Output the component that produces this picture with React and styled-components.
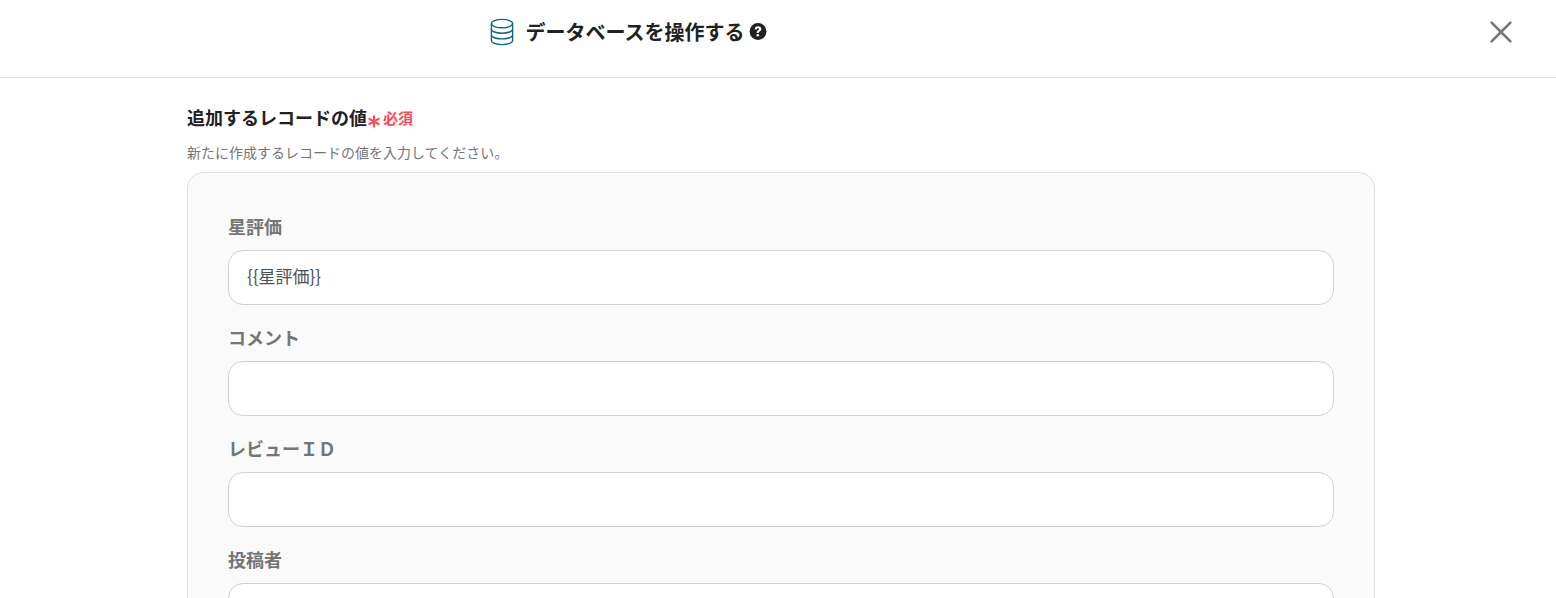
import {useState} from "react";
import styled, {createGlobalStyle} from "styled-components";

const initialFields = [
    {id: "rating", label: "星評価", value: "{{星評価}}"},
    {id: "comment", label: "コメント", value: ""},
    {id: "review-id", label: "レビューＩＤ", value: ""},
    {id: "author", label: "投稿者", value: ""}
];

function DatabaseIcon() {
    return (
        <svg width="24" height="28" viewBox="0 0 24 28" fill="none" stroke="#0f6a85" strokeWidth="1.4" aria-hidden="true">
            <ellipse cx="12" cy="5.6" rx="10.6" ry="4.2"/>
            <path d="M1.4 5.6v17c0 2.2 4.6 4 10.6 4s10.6-1.8 10.6-4v-17"/>
            <path d="M1.4 11.2c0 2.2 4.6 4 10.6 4s10.6-1.8 10.6-4"/>
            <path d="M1.4 16.9c0 2.2 4.6 4 10.6 4s10.6-1.8 10.6-4"/>
        </svg>
    );
}

function HelpIcon() {
    return (
        <svg width="18" height="18" viewBox="0 0 512 512" fill="#212121" aria-hidden="true">
            <circle cx="256" cy="240" r="240"/>
            <path d="M160 178c8-52 42-84 98-84 52 0 92 30 92 76 0 38-20 56-46 72-20 13-26 20-26 42h-58c0-46 14-62 42-80 16-10 24-18 24-32s-12-24-29-24c-21 0-32 13-37 38z" fill="#fff"/>
            <circle cx="250" cy="346" r="36" fill="#fff"/>
        </svg>
    );
}

function CloseIcon() {
    return (
        <svg width="24" height="24" viewBox="0 0 24 24" fill="none" stroke="#757575" strokeWidth="2.6" strokeLinecap="round" aria-hidden="true">
            <path d="M2.6 2.6l18.8 18.8M21.4 2.6L2.6 21.4"/>
        </svg>
    );
}

function AsteriskIcon() {
    return (
        <svg width="12" height="20" viewBox="0 0 12 20" fill="none" stroke="#ff4757" strokeWidth="2.1" strokeLinecap="round" aria-hidden="true">
            <path d="M6 8.4v10M1.4 10.8l9.2 5.2M10.6 10.8L1.4 16"/>
        </svg>
    );
}

export default function App() {
    const [fields, setFields] = useState(initialFields);
    const handleChange = (id, value) => {
        setFields(fields.map((field) => field.id === id ? {...field, value} : field));
    };
    return (
        <>
            <GlobalStyle/>
            <Header>
                <TitleArea>
                    <DatabaseIcon/>
                    <Title>データベースを操作する</Title>
                    <HelpButton type="button" aria-label="ヘルプ"><HelpIcon/></HelpButton>
                </TitleArea>
                <Actions>
                    <CloseButton type="button" aria-label="閉じる"><CloseIcon/></CloseButton>
                </Actions>
            </Header>
            <Main>
                <SectionHead>
                    <SectionTitle>追加するレコードの値</SectionTitle>
                    <Required><AsteriskIcon/>必須</Required>
                </SectionHead>
                <Description>新たに作成するレコードの値を入力してください。</Description>
                <Panel>
                    {fields.map((field) => (
                        <Field key={field.id}>
                            <Label htmlFor={field.id}>{field.label}</Label>
                            <Input id={field.id} type="text" value={field.value}
                                   onChange={(e) => handleChange(field.id, e.target.value)}/>
                        </Field>
                    ))}
                </Panel>
            </Main>
        </>
    );
}

const GlobalStyle = createGlobalStyle`
    * {
        box-sizing: border-box;
    }

    html {
        scrollbar-width: none;
    }

    body {
        margin: 0;
        background: #fff;
        color: #212121;
        font-family: "Noto Sans CJK JP", sans-serif;
    }
`;

const Header = styled.header`
    display: flex;
    align-items: flex-start;
    padding-top: 16px;
    padding-bottom: 29px;
    border-bottom: 1px solid #e0e0e0;
`;

const TitleArea = styled.div`
    flex: 1;
    display: flex;
    align-items: center;
    justify-content: center;
    height: 32px;
`;

const Title = styled.h1`
    margin: 0 4px 0 12px;
    font-size: 20px;
    line-height: 32px;
    font-weight: 700;
`;

const IconButton = styled.button`
    display: flex;
    padding: 0;
    border: 0;
    background: none;
    cursor: pointer;
`;

const HelpButton = styled(IconButton)``;

const CloseButton = styled(IconButton)``;

const Actions = styled.div`
    display: flex;
    align-items: center;
    justify-content: flex-end;
    width: 300px;
    height: 32px;
    padding-right: 43px;
`;

const Main = styled.main`
    padding: 26px 181px 0 187px;
`;

const SectionHead = styled.div`
    display: flex;
    align-items: flex-start;
    gap: 1px;
`;

const SectionTitle = styled.h2`
    margin: 0;
    font-size: 18px;
    line-height: 26px;
    font-weight: 700;
`;

const Required = styled.span`
    display: flex;
    align-items: center;
    gap: 3px;
    color: #ff4757;
    font-size: 15px;
    line-height: 28px;
    font-weight: 700;
`;

const Description = styled.p`
    margin: 10px 0;
    color: #757575;
    font-size: 14px;
    line-height: 20px;
`;

const Panel = styled.form`
    display: flex;
    flex-direction: column;
    gap: 18px;
    padding: 39px 40px;
    border: 1px solid #dee0e4;
    border-radius: 16px;
    background: #fafafa;
`;

const Field = styled.div`
    display: flex;
    flex-direction: column;
    gap: 10px;
`;

const Label = styled.label`
    color: #757575;
    font-size: 18px;
    line-height: 28px;
    font-weight: 700;
`;

const Input = styled.input`
    width: 100%;
    height: 55px;
    padding: 0 18px 4px;
    border: 1px solid #ced1d8;
    border-radius: 15px;
    background: #fff;
    color: #495057;
    font-family: inherit;
    font-size: 17px;
`;
